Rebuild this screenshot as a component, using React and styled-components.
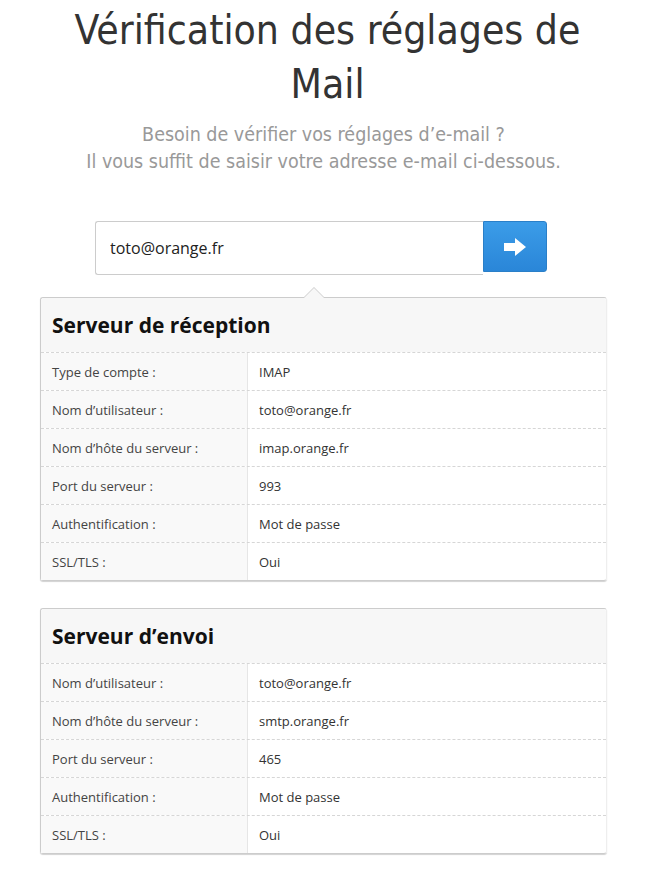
import styled, { createGlobalStyle } from "styled-components";

const GlobalStyle = createGlobalStyle`
  body {
    margin: 0;
    background: #fff;
    font-family: "Open Sans", "DejaVu Sans", sans-serif;
  }
`;

const Page = styled.div`
  width: 567px;
  margin-left: 40px;
  padding-top: 3px;
  padding-bottom: 36px;
`;

const Title = styled.h1`
  margin: 0 0 0 8px;
  text-align: center;
  font-family: "DejaVu Sans Condensed", "DejaVu Sans", sans-serif;
  font-weight: 400;
  font-size: 40.5px;
  line-height: 54px;
  color: #333;
`;

const Lead = styled.p`
  margin: 10px 0 0;
  text-align: center;
  font-family: "DejaVu Sans Condensed", "DejaVu Sans", sans-serif;
  font-size: 19.5px;
  line-height: 27px;
  color: #999;
`;

const SearchForm = styled.form`
  display: flex;
  margin: 46px 0 0 55px;
  width: 452px;
`;

const EmailInput = styled.input`
  box-sizing: border-box;
  width: 388px;
  height: 54px;
  padding: 0 14px;
  border: 1px solid #ccc;
  border-right: none;
  border-radius: 3px 0 0 3px;
  font-family: "Open Sans", sans-serif;
  font-size: 16px;
  color: #222;
  outline: none;
`;

const GoButton = styled.button`
  display: flex;
  align-items: center;
  justify-content: center;
  width: 64px;
  height: 51px;
  padding: 0;
  border: 1px solid #2a7fc8;
  border-radius: 0 3px 3px 0;
  background: linear-gradient(#3b9ce8, #2a86d8);
  cursor: pointer;
`;

const Card = styled.section`
  position: relative;
  margin-top: ${p => p.$gap}px;
  border: 1px solid #ccc;
  border-right-color: #eee;
  border-radius: 3px;
  box-shadow: 0 1px 1px rgba(0, 0, 0, 0.18);

  ${p => p.$pointer && `
    &::before, &::after {
      content: "";
      position: absolute;
      left: 263px;
      border: 10px solid transparent;
      border-top: none;
    }
    &::before {
      top: -11px;
      border-bottom: 10px solid #ccc;
    }
    &::after {
      top: -10px;
      border-bottom: 10px solid #f7f7f7;
    }
  `}
`;

const CardHead = styled.h2`
  margin: 0;
  height: 54px;
  display: flex;
  align-items: center;
  padding: 0 11px;
  background: #f7f7f7;
  border-radius: 3px 3px 0 0;
  font-family: "Open Sans", sans-serif;
  font-weight: 700;
  font-size: 21px;
  color: #111;
`;

const Row = styled.div`
  display: grid;
  grid-template-columns: 207px 1fr;
  height: 38px;
  border-top: 1px dashed #d6d6d6;
  box-sizing: border-box;
  font-family: "Open Sans", sans-serif;
  font-size: 13px;
`;

const Label = styled.div`
  display: flex;
  align-items: center;
  padding-left: 11px;
  background: #f9f9f9;
  border-right: 1px solid #e6e6e6;
  color: #444;
`;

const Value = styled.div`
  display: flex;
  align-items: center;
  padding-left: 11px;
  color: #333;
`;

const Arrow = () => (
  <svg width="22" height="18" viewBox="0 0 22 18">
    <path d="M0 5h11V0l11 9-11 9v-5H0z" fill="#fff" />
  </svg>
);

const incoming = [
  ["Type de compte :", "IMAP"],
  ["Nom d’utilisateur :", "toto@orange.fr"],
  ["Nom d’hôte du serveur :", "imap.orange.fr"],
  ["Port du serveur :", "993"],
  ["Authentification :", "Mot de passe"],
  ["SSL/TLS :", "Oui"],
];

const outgoing = [
  ["Nom d’utilisateur :", "toto@orange.fr"],
  ["Nom d’hôte du serveur :", "smtp.orange.fr"],
  ["Port du serveur :", "465"],
  ["Authentification :", "Mot de passe"],
  ["SSL/TLS :", "Oui"],
];

const ServerCard = ({ title, rows, gap, pointer }) => (
  <Card $gap={gap} $pointer={pointer}>
    <CardHead>{title}</CardHead>
    {rows.map(([label, value]) => (
      <Row key={label}>
        <Label>{label}</Label>
        <Value>{value}</Value>
      </Row>
    ))}
  </Card>
);

export default function App() {
  return (
    <>
      <GlobalStyle />
      <Page>
        <Title>Vérification des réglages de Mail</Title>
        <Lead>
          Besoin de vérifier vos réglages d’e-mail ?<br />
          Il vous suffit de saisir votre adresse e-mail ci-dessous.
        </Lead>
        <SearchForm onSubmit={e => e.preventDefault()}>
          <EmailInput type="email" defaultValue="toto@orange.fr" />
          <GoButton type="submit">
            <Arrow />
          </GoButton>
        </SearchForm>
        <ServerCard title="Serveur de réception" rows={incoming} gap={22} pointer />
        <ServerCard title="Serveur d’envoi" rows={outgoing} gap={27} />
      </Page>
    </>
  );
}
